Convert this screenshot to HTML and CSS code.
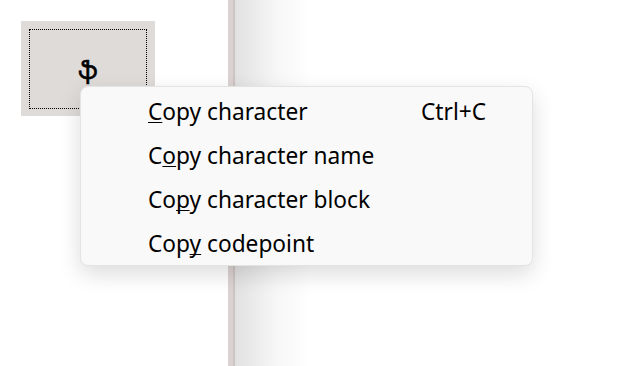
FILE: index.html
```html
<!DOCTYPE html>
<html>
  <head>
    <link rel="stylesheet" href="styles.css">
  </head>
  <body>
    <div class="window">
      <div class="grid-pane">
        <div class="tile">
          <div class="tile-focus">
            <span class="glyph">ֆ</span>
          </div>
        </div>
      </div>
      <div class="splitter"></div>
      <div class="detail-pane"></div>
    </div>

    <div class="context-menu">
      <div class="menu-item">
        <span class="label"><u>C</u>opy character</span>
        <span class="shortcut">Ctrl+C</span>
      </div>
      <div class="menu-item">
        <span class="label">C<u>o</u>py character name</span>
      </div>
      <div class="menu-item">
        <span class="label">Co<u>p</u>y character block</span>
      </div>
      <div class="menu-item">
        <span class="label">Cop<u>y</u> codepoint</span>
      </div>
    </div>
  </body>
</html>
```

FILE: styles.css
```css
body {
  margin: 0;
  font-family: "Noto Sans", "Open Sans", sans-serif;
  background-color: #ffffff;
  overflow: hidden;
}

.window {
  display: flex;
  height: 366px;
}

.grid-pane {
  width: 228px;
  padding: 21px 0 0 21px;
  box-sizing: border-box;
}

.tile {
  width: 134px;
  height: 95px;
  background-color: #dfdbd9;
  padding: 8px;
  box-sizing: border-box;
}

.tile-focus {
  height: 80px;
  width: 118px;
  border: 1px dotted #000000;
  box-sizing: border-box;
  display: flex;
  align-items: center;
  justify-content: center;
}

.glyph {
  font-family: "DejaVu Sans", sans-serif;
  font-size: 24px;
  color: #000000;
  margin-top: 4px;
  -webkit-text-stroke: 0.6px #000000;
}

.splitter {
  width: 5px;
  background-color: #dbd3d1;
  border-right: 2px solid #cdc4c3;
}

.detail-pane {
  flex: 1;
  background: linear-gradient(to right, #e1e1e1 0px, #f6f6f6 40px, #ffffff 75px);
}

.context-menu {
  position: absolute;
  left: 80px;
  top: 86px;
  width: 453px;
  height: 180px;
  box-sizing: border-box;
  padding: 2px 0 6px;
  background-color: #f9f9f9;
  border: 1px solid #e3e3e3;
  border-radius: 8px;
  box-shadow: 0 8px 22px rgba(0, 0, 0, 0.14);
}

.menu-item {
  display: flex;
  align-items: center;
  height: 44px;
  padding-left: 67px;
  font-size: 22.7px;
  color: #000000;
}

.menu-item .label {
  width: 273px;
}

.menu-item u {
  text-decoration-thickness: 1px;
  text-decoration-skip-ink: none;
  text-underline-offset: 2px;
}
```
